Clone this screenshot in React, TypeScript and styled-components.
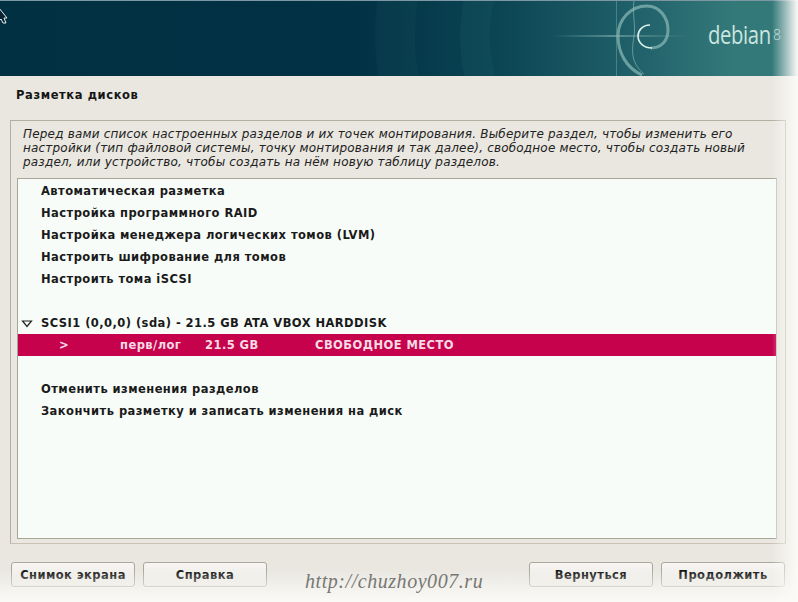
import React from 'react';
import styled, { createGlobalStyle } from 'styled-components';

const GlobalStyle = createGlobalStyle`
  html, body {
    margin: 0;
    padding: 0;
    background: #fbfaf7;
  }
  body {
    font-family: "DejaVu Sans", "Liberation Sans", sans-serif;
    color: #111;
  }
`;

const Page = styled.div`
  position: relative;
  width: 798px;
  height: 602px;
  overflow: hidden;
  display: flex;
  flex-direction: column;
  background: #e9e7e0;
`;

const Banner = styled.header`
  position: relative;
  height: 76px;
  flex: none;
  overflow: hidden;
  box-sizing: border-box;
  border-top: 1px solid #7d98a2;
  background: linear-gradient(90deg, #013042 0%, #013144 44%, #0b4453 62%, #1e5e68 78%, #34797a 92%, #34797a 100%);
`;

const BannerArt = styled.svg`
  position: absolute;
  left: 540px;
  top: -1px;
  width: 200px;
  height: 76px;
  overflow: visible;
`;

const Brand = styled.div`
  position: absolute;
  left: 708px;
  top: 17px;
  font-family: "Open Sans", "DejaVu Sans", sans-serif;
  font-size: 26px;
  line-height: 32px;
  letter-spacing: -0.5px;
  color: #cbe5df;
  transform: scaleX(0.78);
  transform-origin: left center;
`;

const BrandVersion = styled.div`
  position: absolute;
  left: 773px;
  top: 25px;
  font-family: "Open Sans", "DejaVu Sans", sans-serif;
  font-size: 14px;
  line-height: 18px;
  font-weight: 300;
  color: #b9d8d4;
`;

const Title = styled.h1`
  margin: 0;
  padding: 12px 0 0 16px;
  height: 44px;
  box-sizing: border-box;
  font-size: 11.5px;
  line-height: 14px;
  font-weight: bold;
  letter-spacing: 0.6px;
  color: #151515;
`;

const Panel = styled.section`
  margin-left: 10px;
  width: 776px;
  height: 424px;
  box-sizing: border-box;
  padding: 6px 8px 4px 6px;
  border: 1px solid #b3afa2;
  border-bottom-color: #c9c2b4;
  display: flex;
  flex-direction: column;
`;

const Intro = styled.p`
  margin: 0 0 8px 6px;
  height: 43px;
  font-size: 12px;
  line-height: 14px;
  font-style: italic;
  letter-spacing: 0.19px;
  color: #222;
  white-space: nowrap;
`;

const List = styled.ul`
  margin: 0;
  padding: 1px 0 0;
  list-style: none;
  flex: 1;
  background: #f8fcf9;
  border: 1px solid #a9a698;
  border-right-color: #c4c1b5;
`;

const Row = styled.li<{ $selected?: boolean }>`
  position: relative;
  height: 22px;
  display: flex;
  align-items: center;
  padding-left: 23px;
  font-size: 11.5px;
  font-weight: bold;
  letter-spacing: 0.44px;
  white-space: pre;
  color: ${(props) => (props.$selected ? '#f6dbe4' : '#1a1a1a')};
  background: ${(props) => (props.$selected ? '#c7024d' : 'transparent')};
`;

const Cell = styled.span<{ $width: number }>`
  display: inline-block;
  width: ${(props) => props.$width}px;
  flex: none;
`;

const Expander = styled.svg`
  position: absolute;
  left: 3px;
  top: 8px;
  width: 12px;
  height: 8px;
`;

const Footer = styled.footer`
  display: flex;
  align-items: flex-start;
  padding: 18px 13px 0 11px;
`;

const Button = styled.button<{ $last?: boolean }>`
  width: 124px;
  height: 25px;
  flex: none;
  padding: 0;
  margin-right: ${(props) => (props.$last ? 0 : 8)}px;
  border: 1px solid #aaa89c;
  border-radius: 3px;
  background: linear-gradient(#f7f6f3, #e8e6df);
  box-shadow: 0 1px 0 #f4f2ed;
  font-family: inherit;
  font-size: 11.5px;
  font-weight: bold;
  letter-spacing: 0.45px;
  color: #111;
`;

const Watermark = styled.div`
  flex: 1;
  position: relative;
  z-index: 1;
  padding: 8px 0 0 30px;
  font-family: "Liberation Serif", serif;
  font-style: italic;
  font-size: 20px;
  line-height: 23px;
  letter-spacing: 0.55px;
  color: #777773;
  white-space: nowrap;
`;

const Fade = styled.div`
  position: absolute;
  inset: 0;
  pointer-events: none;
  background:
    linear-gradient(90deg, transparent 772px, rgba(251, 250, 247, 0.97) 797px),
    linear-gradient(180deg, transparent 570px, rgba(251, 250, 247, 0.95) 600px);
`;

const CursorMark = styled.svg`
  position: absolute;
  left: 0;
  top: 7px;
  width: 8px;
  height: 17px;
`;

const menuTop = ['Автоматическая разметка', 'Настройка программного RAID', 'Настройка менеджера логических томов (LVM)', 'Настроить шифрование для томов', 'Настроить тома iSCSI'];
const menuBottom = ['Отменить изменения разделов', 'Закончить разметку и записать изменения на диск'];

export default function App() {
  return (
    <Page>
      <GlobalStyle />
      <Banner>
        <CursorMark viewBox="0 0 8 17">
          <path d="M-1 0 L7 10 L4 10 L6 15 L3 15 L1 11 L-1 13 Z" fill="#0a2230" stroke="#e6eef0" strokeWidth="1" />
        </CursorMark>
        <BannerArt viewBox="0 0 200 76" fill="none">
          <defs>
            <linearGradient id="beam">
              <stop offset="0" stopColor="#a9d2cf" stopOpacity="0" />
              <stop offset="0.45" stopColor="#b9dcd8" stopOpacity="0.8" />
              <stop offset="1" stopColor="#a9d2cf" stopOpacity="0" />
            </linearGradient>
          </defs>
          <circle cx="105" cy="36" r="170" stroke="#3f7c84" strokeWidth="30" opacity="0.1" />
          <circle cx="105" cy="36" r="250" stroke="#3f7c84" strokeWidth="40" opacity="0.08" />
          <rect x="10" y="35.5" width="140" height="1" fill="url(#beam)" />
          <path d="M76.5 0 V76" stroke="#9cc7c4" strokeWidth="1" opacity="0.35" />
          <path d="M94 0 C92 14 96 26 94 36 C92 50 90 62 104 74" stroke="#9cc4c1" strokeWidth="1" opacity="0.55" />
          <path d="M102 75 C86 68 78 52 78 36 C78 20 90 6 107 6 C120 6 128 18 128 30 C128 42 120 48 111 48" stroke="#8dbab7" strokeWidth="3" opacity="0.7" />
          <path d="M110 25 C102 25 98 31 98 36 C98 43 104 48 112 48" stroke="#d8efea" strokeWidth="1.6" />
        </BannerArt>
        <Brand>debian</Brand>
        <BrandVersion>8</BrandVersion>
      </Banner>
      <Title>Разметка дисков</Title>
      <Panel>
        <Intro>
          Перед вами список настроенных разделов и их точек монтирования. Выберите раздел, чтобы изменить его
          <br />
          настройки (тип файловой системы, точку монтирования и так далее), свободное место, чтобы создать новый
          <br />
          раздел, или устройство, чтобы создать на нём новую таблицу разделов.
        </Intro>
        <List>
          {menuTop.map((item) => (
            <Row key={item}>{item}</Row>
          ))}
          <Row />
          <Row>
            <Expander viewBox="0 0 12 8">
              <path d="M1.5 1 H10.5 L6 6.5 Z" fill="none" stroke="#222" strokeWidth="1.2" />
            </Expander>
            SCSI1 (0,0,0) (sda) - 21.5 GB ATA VBOX HARDDISK
          </Row>
          <Row $selected>
            <Cell $width={18} />
            <Cell $width={61}>&gt;</Cell>
            <Cell $width={85}>перв/лог</Cell>
            <Cell $width={110}>21.5 GB</Cell>
            СВОБОДНОЕ МЕСТО
          </Row>
          <Row />
          {menuBottom.map((item) => (
            <Row key={item}>{item}</Row>
          ))}
        </List>
      </Panel>
      <Footer>
        <Button>Снимок экрана</Button>
        <Button>Справка</Button>
        <Watermark>http://chuzhoy007.ru</Watermark>
        <Button>Вернуться</Button>
        <Button $last>Продолжить</Button>
      </Footer>
      <Fade />
    </Page>
  );
}
